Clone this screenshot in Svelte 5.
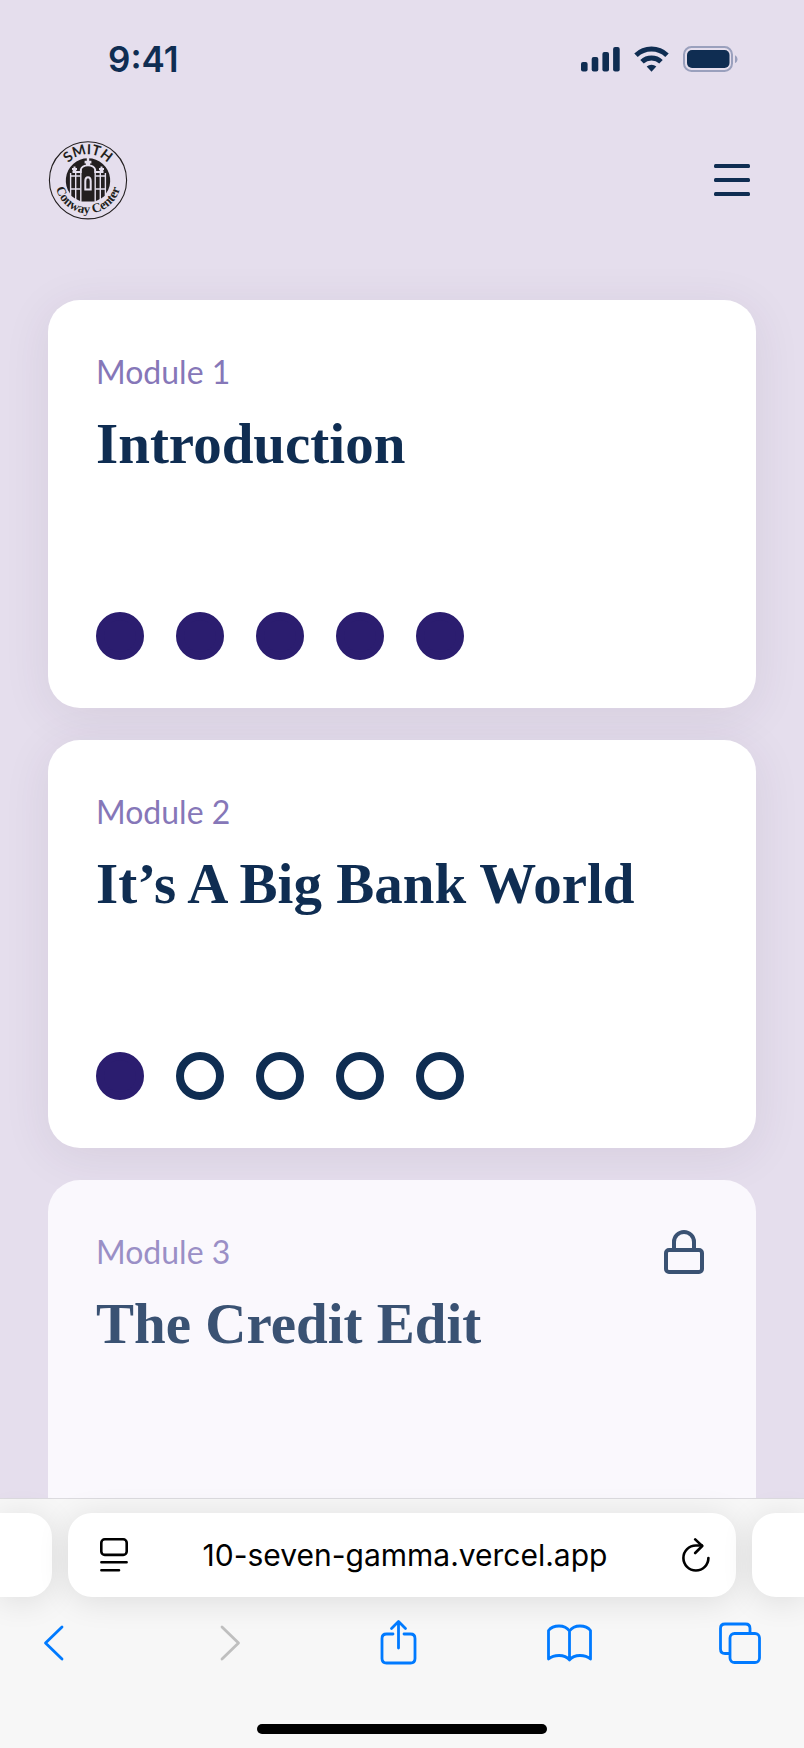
<script>
  const modules = [
    { number: 1, title: 'Introduction', done: 5, total: 5, locked: false },
    { number: 2, title: 'It’s A Big Bank World', done: 1, total: 5, locked: false },
    { number: 3, title: 'The Credit Edit', done: 0, total: 5, locked: true }
  ];
  let address = $state('10-seven-gamma.vercel.app');
</script>

<div class="screen">
  <div class="status">
    <time>9:41</time>
    <div class="signals">
      <svg width="39" height="26" viewBox="0 0 39 26" fill="currentColor" aria-hidden="true">
        <rect x="0" y="16" width="6.6" height="9.5" rx="2" />
        <rect x="10.7" y="11" width="6.6" height="14.5" rx="2" />
        <rect x="21.4" y="6" width="6.6" height="19.5" rx="2" />
        <rect x="32.1" y="1" width="6.6" height="24.5" rx="2" />
      </svg>
      <svg width="35" height="26" viewBox="0 0 35 26" aria-hidden="true">
        <g fill="none" stroke="currentColor" stroke-width="5">
          <path d="M2 9.2A22.4 22.4 0 0 1 33 9.2" />
          <path d="M8 15.8A13.8 13.8 0 0 1 27 15.8" />
        </g>
        <path d="M17.5 25.8L12.7 20.6A7 7 0 0 1 22.3 20.6Z" fill="currentColor" />
      </svg>
      <svg width="55" height="26" viewBox="0 0 55 26" aria-hidden="true">
        <rect x="1" y="1" width="48" height="24" rx="7.5" fill="none" stroke="#9aa0bd" stroke-width="2" />
        <rect x="4" y="4" width="42.5" height="18" rx="5" fill="currentColor" />
        <path d="M52 9.3C55.3 10.8 55.3 15.6 52 17Z" fill="#9aa0bd" />
      </svg>
    </div>
  </div>

  <header>
    <a class="logo" href="#home" aria-label="Smith Conway Center">
      <svg width="80" height="80" viewBox="0 0 80 80">
        <defs>
          <path id="arc-top" d="M14 40.3A26 26 0 0 1 66 40.3" />
          <path id="arc-bottom" d="M7 40.3A33 33 0 0 0 73 40.3" />
        </defs>
        <circle cx="40" cy="40.3" r="38.6" fill="none" stroke="#231f20" stroke-width="1.1" />
        <text class="arc-sans" text-anchor="middle"><textPath href="#arc-top" startOffset="50%">SMITH</textPath></text>
        <text class="arc-serif" text-anchor="middle"><textPath href="#arc-bottom" startOffset="50%">Conway Center</textPath></text>
        <path d="M22 53.500A22.2 22.2 0 1 1 58 53.500V55L53 58.500L47 61.500H33L27 58.500L22 55Z" fill="#231f20" />
        <g fill="none" stroke="#e5dfee" stroke-width="1.4">
          <path d="M22.600 33V57M27.700 33V60M32.800 29V63M47.200 29V63M52.300 33V60M57.400 33V57" />
          <path d="M22 36H32.500M47.500 36H58M22 49H32.500M47.500 49H58" />
          <path d="M24.500 32H32.8V29.500Q34 25.300 40 25.300T47.200 29.500V32H55.500" stroke-width="1.800" />
          <path d="M37.300 49.500V41Q37.300 37.300 40 37.300T42.700 41V49.500Z" stroke-width="2" />
        </g>
        <g fill="#e5dfee">
          <path d="M38 25.500V23.500H36.6V20.8H38.8V18H41.2V20.800H43.4V23.500H42V25.500Z" />
          <path d="M25 32.500V30.300H24V28H25.500V26.500H27.500V28H29V30.300H28V32.500ZM52 32.500V30.300H51V28H52.500V26.500H54.500V28H56V30.300H55V32.500Z" />
        </g>
      </svg>
    </a>
    <button class="menu" aria-label="Open menu">
      <svg width="36" height="32" viewBox="0 0 36 32" fill="currentColor" aria-hidden="true">
        <rect width="36" height="4" rx="1.5" />
        <rect y="14" width="36" height="4" rx="1.5" />
        <rect y="28" width="36" height="4" rx="1.5" />
      </svg>
    </button>
  </header>

  <main>
    {#each modules as item (item.number)}
      <article class:locked={item.locked}>
        <div class="heading">
          <p>Module {item.number}</p>
          {#if item.locked}
            <svg width="40" height="44" viewBox="0 0 40 44" fill="none" stroke="currentColor" stroke-width="4" role="img" aria-label="Locked">
              <rect x="2" y="20" width="36" height="22" rx="3" />
              <path d="M10 20V12A10 10 0 0 1 30 12V20" />
            </svg>
          {/if}
        </div>
        <h2>{item.title}</h2>
        {#if !item.locked}
          <div class="dots" role="img" aria-label="{item.done} of {item.total} lessons done">
            {#each Array(item.total) as _, i}
              <span class="dot" class:done={i < item.done}></span>
            {/each}
          </div>
        {/if}
      </article>
    {/each}
  </main>

  <footer>
    <div class="tabs">
      <div class="tab side"></div>
      <div class="tab address">
        <button aria-label="Page settings">
          <svg width="28" height="34" viewBox="0 0 28 34" fill="none" stroke="currentColor" stroke-width="2.6" stroke-linecap="round" aria-hidden="true">
            <rect x="1.3" y="1.3" width="25.4" height="15.6" rx="3.5" />
            <path d="M1.4 24.2H26.6M1.4 32.2H19" />
          </svg>
        </button>
        <input type="text" aria-label="Address" bind:value={address} />
        <button aria-label="Reload">
          <svg width="28" height="34" viewBox="0 0 28 34" fill="none" stroke="currentColor" stroke-width="2.6" stroke-linecap="round" stroke-linejoin="round" aria-hidden="true">
            <path d="M26.4 20A12.5 12.5 0 1 1 13.9 7.5H20" />
            <path d="M13.2 1.4L20.2 8L13.2 15" />
          </svg>
        </button>
      </div>
      <div class="tab side"></div>
    </div>
    <nav aria-label="Browser">
      <button aria-label="Back">
        <svg viewBox="0 0 48 48"><path d="M32 8L15.5 24L32 40" /></svg>
      </button>
      <button aria-label="Forward" disabled>
        <svg viewBox="0 0 48 48"><path d="M20 8L36.5 24L20 40" /></svg>
      </button>
      <button aria-label="Share">
        <svg viewBox="0 0 48 48"><path d="M20 15H13.5Q9 15 9 19.5V39.5Q9 44 13.5 44H37.500Q42 44 42 39.5V19.5Q42 15 37.5 15H31M25.5 29V3M18.5 9.500L25.5 2.5L32.5 9.5" /></svg>
      </button>
      <button aria-label="Bookmarks">
        <svg viewBox="0 0 48 48"><path d="M24.5 12Q21 7 14 7Q7 7 3.5 11.5V40Q7.5 36.5 14 36.5Q21 36.5 24.5 41Q28 36.5 35 36.5Q41.5 36.5 45.5 40V11.5Q42 7 35 7Q28 7 24.5 12V41" /></svg>
      </button>
      <button aria-label="Tabs">
        <svg viewBox="0 0 48 48"><path d="M34 14V9.500Q34 5 29.5 5H9Q4.5 5 4.5 9.5V30Q4.5 34.5 9 34.5H13.5" /><rect x="14" y="14.5" width="29.5" height="29" rx="4.5" /></svg>
      </button>
    </nav>
    <div class="home"></div>
  </footer>
</div>

<style>
  :global(body) {
    margin: 0;
    background: #e5deed;
  }

  .screen {
    display: flex;
    flex-direction: column;
    height: 100vh;
    overflow: hidden;
    background: #e5deed;
    color: #0f2d52;
    font-family: Inter, sans-serif;
  }

  button {
    display: flex;
    padding: 0;
    border: 0;
    background: none;
    color: inherit;
  }

  svg {
    display: block;
    flex: none;
  }

  .status {
    display: flex;
    flex: none;
    align-items: center;
    justify-content: space-between;
    height: 118px;
    padding: 0 66px 0 108px;
  }

  time {
    font-size: 35px;
    font-weight: 600;
    line-height: 40px;
  }

  .signals {
    display: flex;
    gap: 14px;
  }

  header {
    display: flex;
    flex: none;
    align-items: center;
    justify-content: space-between;
    padding: 22px 54px 0 48px;
  }

  .arc-sans {
    fill: #231f20;
    font: 700 14px Lato, sans-serif;
  }

  .arc-serif {
    fill: #231f20;
    font: 700 13px "Liberation Serif", serif;
  }

  main {
    display: flex;
    flex: 1;
    flex-direction: column;
    gap: 32px;
    min-height: 0;
    padding: 80px 48px 0;
    overflow: hidden;
  }

  article {
    display: flex;
    flex: none;
    flex-direction: column;
    box-sizing: border-box;
    min-height: 408px;
    padding: 48px;
    border-radius: 32px;
    background: #fff;
    box-shadow: 0 8px 48px rgba(64, 40, 80, 0.09);
  }

  .locked {
    background: #faf8fd;
    color: #3a5273;
    box-shadow: none;
  }

  .heading {
    display: flex;
    align-items: center;
    justify-content: space-between;
    padding-right: 4px;
  }

  p {
    margin: 0;
    color: #8677b8;
    font-family: Lato, sans-serif;
    font-size: 32px;
    line-height: 48px;
  }

  .locked p {
    color: #9a8fc6;
  }

  h2 {
    margin: 12px 0 0;
    font-family: "Liberation Serif", serif;
    font-size: 57px;
    font-weight: 700;
    line-height: 72px;
  }

  .dots {
    display: flex;
    gap: 32px;
    margin-top: auto;
  }

  .dot {
    box-sizing: border-box;
    width: 48px;
    height: 48px;
    border: 8px solid currentColor;
    border-radius: 50%;
  }

  .done {
    border-color: #2b1d6f;
    background: #2b1d6f;
  }

  footer {
    flex: none;
    padding: 14px 0;
    border-top: 1px solid #dcdbdf;
    background: #f7f7f7;
    color: #000;
  }

  .tabs {
    display: flex;
    gap: 16px;
  }

  .tab {
    height: 84px;
    border-radius: 24px;
    background: #fff;
    box-shadow: 0 4px 32px rgba(0, 0, 0, 0.11);
  }

  .side {
    width: 52px;
  }

  .side:first-child {
    border-radius: 0 24px 24px 0;
  }

  .side:last-child {
    border-radius: 24px 0 0 24px;
  }

  .address {
    display: flex;
    flex: 1;
    align-items: center;
    box-sizing: border-box;
    min-width: 0;
    padding: 0 26px 0 32px;
  }

  input {
    flex: 1;
    min-width: 0;
    padding: 0;
    border: 0;
    outline: 0;
    background: none;
    color: #000;
    font-family: Inter, sans-serif;
    font-size: 30px;
    line-height: 40px;
    text-align: center;
  }

  nav {
    display: flex;
    justify-content: space-between;
    margin-top: 22px;
    padding: 0 40px 0 30px;
    color: #007aff;
  }

  nav svg {
    width: 48px;
    height: 48px;
    fill: none;
    stroke: currentColor;
    stroke-width: 2.8;
    stroke-linecap: round;
    stroke-linejoin: round;
  }

  nav button:disabled {
    color: #bfbfbf;
  }

  .home {
    width: 36%;
    height: 10px;
    margin: 57px auto 0;
    border-radius: 5px;
    background: #000;
  }
</style>
